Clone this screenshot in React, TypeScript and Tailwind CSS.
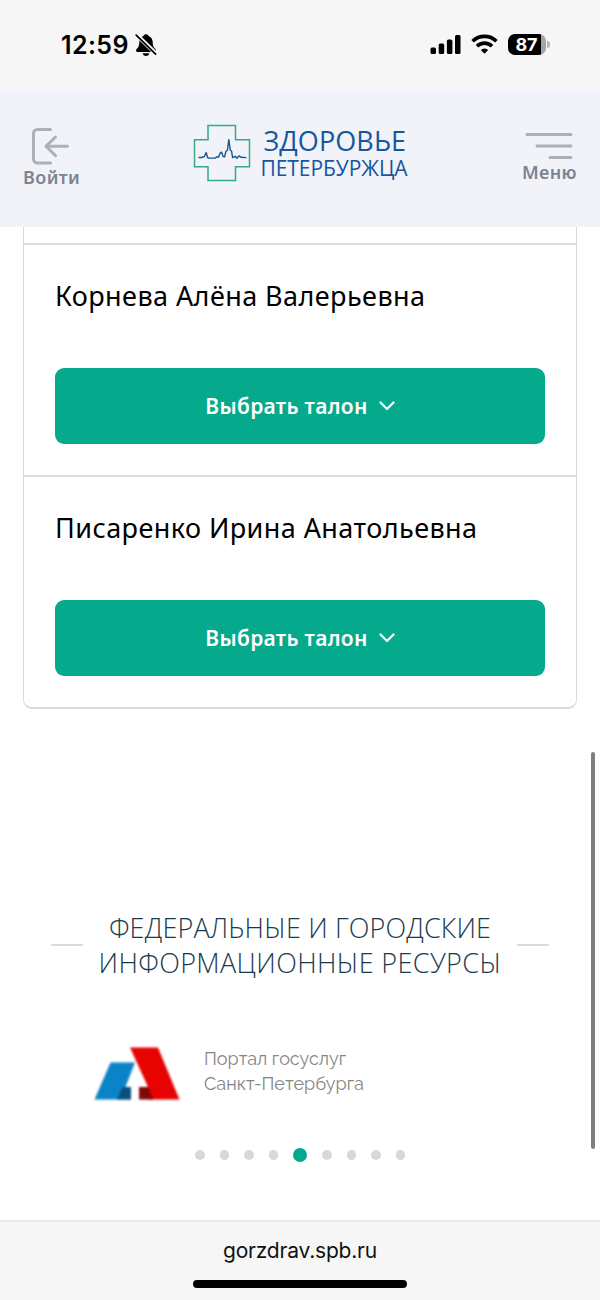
const doctors = ['Корнева Алёна Валерьевна', 'Писаренко Ирина Анатольевна']

const slides = 9
const activeSlide = 4

function StatusBar() {
  return (
    <div className="flex h-[90px] shrink-0 items-start justify-between bg-[#f6f6f6] pr-[50px] pl-[61px]">
      <div className="flex items-center pt-[29px]">
        <span className="font-[Inter] text-[25px] leading-8 font-semibold tracking-[0.4px] text-black">12:59</span>
        <svg className="ml-[6px]" width="22" height="24" viewBox="0 0 22 24">
          <path
            d="M11 1.2c-1.5 0-2.3.8-2.5 1.8C5.6 4.1 4.4 6.4 4.3 9.3c-.1 3.6-.9 5-2.2 6.3-.9.9-1.2 1.5-1.1 2.2.1.7.7 1.1 1.6 1.1h16.8c.9 0 1.5-.4 1.6-1.1.1-.7-.2-1.3-1.1-2.2-1.3-1.3-2.1-2.7-2.2-6.3-.1-2.9-1.3-5.2-4.2-6.3-.2-1-1-1.8-2.5-1.8z"
            fill="#000"
          />
          <path d="M7.6 20.3h6.8c-.3 1.6-1.6 2.7-3.4 2.7s-3.1-1.1-3.4-2.7z" fill="#000" />
          <path d="M1.8 2 21 20.8" stroke="#f6f6f6" strokeWidth="4.2" />
          <path d="M1.2 2.2 20.6 21.2" stroke="#000" strokeWidth="1.7" strokeLinecap="round" />
        </svg>
      </div>
      <div className="flex items-center gap-[10px] pt-[33px]">
        <svg width="31" height="23" viewBox="0 0 31 23" fill="#000">
          <rect x="0.5" y="14.5" width="5.5" height="6.5" rx="1.5" />
          <rect x="8.7" y="10.5" width="5.5" height="10.5" rx="1.5" />
          <rect x="16.9" y="6.5" width="5.5" height="14.5" rx="1.5" />
          <rect x="25" y="2" width="5.5" height="19" rx="1.5" />
        </svg>
        <svg width="27" height="23" viewBox="0 0 27 23" fill="none" stroke="#000" strokeWidth="3.6">
          <path d="M1.6 8.2a17 17 0 0 1 23.8 0" />
          <path d="M6 13.2a10.7 10.7 0 0 1 15 0" />
          <path d="M13.5 20.7 9.8 17a5.3 5.3 0 0 1 7.4 0z" fill="#000" stroke="none" />
        </svg>
        <div className="flex items-center gap-[1px]">
          <div className="flex h-[21px] w-[38px] items-center justify-center overflow-hidden rounded-[7px] bg-[linear-gradient(to_right,#000_87%,#a5a5a5_87%)] pr-px font-[Inter] text-[18px] font-bold text-white">
            87
          </div>
          <div className="h-[7px] w-[3px] rounded-r-full bg-[#b5b5b5]" />
        </div>
      </div>
    </div>
  )
}

function Logo() {
  return (
    <div className="flex items-start">
      <svg width="58" height="58" viewBox="0 0 58 58" fill="none">
        <path d="M15 1.5h27.5v14.2h14v27h-14v13.8H15V42.7H1.5v-27H15z" stroke="#35ab8c" strokeWidth="1.5" />
        <path
          d="M5.5 33.5H9l2.5-1.200 1.700-3.800 1.300 5 1.500.6h6l2-1.300 1.600.3 1.500-3.900 1.500-1 1.500 4.300 1.500.3 1.300-5.300 1.600-1.300 1.300-10.500 1.500 10.300 1.300 1.300 1 6.200 2.600-1.200 1.700 1.900 2-2.300 2.200 1.400 5.400.3"
          stroke="#1b5594"
          strokeWidth="1.4"
          strokeLinejoin="round"
        />
      </svg>
      <div className="ml-[9px] flex flex-col pt-[3px] font-['Open_Sans'] text-[#1557a0]">
        <span className="pl-[3px] text-[27px] leading-[28px] tracking-[0.1px]">ЗДОРОВЬЕ</span>
        <span className="mt-px text-[21px] leading-[25px] tracking-[-0.05px]">ПЕТЕРБУРЖЦА</span>
      </div>
    </div>
  )
}

function Header() {
  return (
    <header className="flex h-[137px] shrink-0 justify-between bg-[#f1f3f8] px-[23px]">
      <button className="flex w-[57px] flex-col pt-[37px] text-[18px] leading-5 font-semibold tracking-[0.4px] text-[#7b8492]">
        <svg className="ml-[8px]" width="40" height="39" viewBox="0 0 40 39" fill="none" stroke="#abb0bc" strokeWidth="3" strokeLinecap="round" strokeLinejoin="round">
          <path d="M19.5 2.5h-13a4 4 0 0 0-4 4V32a4 4 0 0 0 4 4h13M36.5 19.3H15M24.5 10 15 19.3l9.5 9.3" />
        </svg>
        <span className="mt-[1px] whitespace-nowrap">Войти</span>
      </button>
      <div className="pt-[34px]">
        <Logo />
      </div>
      <button className="flex w-[56px] flex-col items-end pt-[42px] text-[18px] leading-5 font-semibold tracking-[0.4px] text-[#7b8492]">
        <svg className="mr-[4px]" width="48" height="28" viewBox="0 0 48 28" stroke="#abb0bc" strokeWidth="3" strokeLinecap="round">
          <path d="M2 2.5h44M12 14h34M25 25.5h21" />
        </svg>
        <span className="mt-[2px] whitespace-nowrap">Меню</span>
      </button>
    </header>
  )
}

function DoctorRow({ name }: { name: string }) {
  return (
    <div className="flex h-[232px] flex-col border-t-2 border-[#dedede] px-[31px]">
      <h3 className="pt-[33px] text-[27px] leading-9 tracking-[0.43px] whitespace-nowrap text-black">{name}</h3>
      <button className="mt-[54px] flex h-[76px] items-center justify-center gap-[11px] rounded-[9px] bg-[#04aa8b] pt-[2px] text-[21px] font-semibold tracking-[0.3px] text-white">
        <span>Выбрать талон</span>
        <svg className="-mt-[2px]" width="16" height="10" viewBox="0 0 16 10" fill="none" stroke="#fff" strokeWidth="2.2" strokeLinecap="round" strokeLinejoin="round">
          <path d="M1.5 1.5 8 8l6.5-6.5" />
        </svg>
      </button>
    </div>
  )
}

function Resources() {
  return (
    <section className="mt-[201px]">
      <div className="flex items-center justify-between px-[51px]">
        <div className="h-[2px] w-8 bg-[#dadada]" />
        <h2 className="text-center font-['Open_Sans'] text-[27px] leading-[35px] font-light whitespace-nowrap text-[#1b3b4d]">
          <span className="block tracking-[0.15px]">ФЕДЕРАЛЬНЫЕ И ГОРОДСКИЕ</span>
          <span className="block tracking-[0.36px]">ИНФОРМАЦИОННЫЕ РЕСУРСЫ</span>
        </h2>
        <div className="h-[2px] w-8 bg-[#dadada]" />
      </div>
      <a className="mt-[65px] ml-[94px] flex items-start">
        <svg width="86" height="56" viewBox="0 0 86 56" className="blur-[0.8px]">
          <path d="M16.5 17.5H41L31.5 42H37v12.5H.5z" fill="#0b83c8" />
          <path d="M28.5 42H37v12.5H23z" fill="#07517f" />
          <path d="M36 2.5h28l21.5 52H54L45 42h9z" fill="#e80303" />
          <path d="M45 42h9l5.5 12.5H45z" fill="#820808" />
        </svg>
        <p className="ml-[24px] pt-[1px] font-[Raleway,Lato] text-[18px] leading-[25px] whitespace-nowrap text-[#858585]">
          Портал госуслуг
          <br />
          Санкт-Петербурга
        </p>
      </a>
      <div className="mt-[47px] flex items-center justify-center gap-[15px]">
        {Array.from({ length: slides }, (_, i) => (
          <div
            key={i}
            className={i === activeSlide ? 'h-[14px] w-[14px] rounded-full bg-[#04aa8b]' : 'h-[9.5px] w-[9.5px] rounded-full bg-[#d8d8d8]'}
          />
        ))}
      </div>
    </section>
  )
}

export default function App() {
  return (
    <div className="relative flex h-[1300px] w-[600px] flex-col overflow-hidden bg-white font-['Noto_Sans',sans-serif]">
      <StatusBar />
      <Header />
      <main className="flex-1 overflow-hidden">
        <div className="mx-[23px] rounded-b-[9px] border-x border-b-2 border-[#d9d9d9] pt-4">
          {doctors.map((name) => (
            <DoctorRow key={name} name={name} />
          ))}
        </div>
        <Resources />
      </main>
      <footer className="flex h-20 shrink-0 flex-col items-center border-t-2 border-[#e9e9e9] bg-[#f6f6f6]">
        <span className="mt-[15px] font-[Inter] text-[21px] leading-7 tracking-[-0.2px] text-[#111111]">gorzdrav.spb.ru</span>
        <div className="mt-[15px] h-2 w-[214px] shrink-0 rounded-full bg-black" />
      </footer>
      {/* scroll thumb */}
      <div className="absolute top-[752px] right-[5px] h-[397px] w-[4px] rounded-full bg-[#7f7f7f]" />
    </div>
  )
}
